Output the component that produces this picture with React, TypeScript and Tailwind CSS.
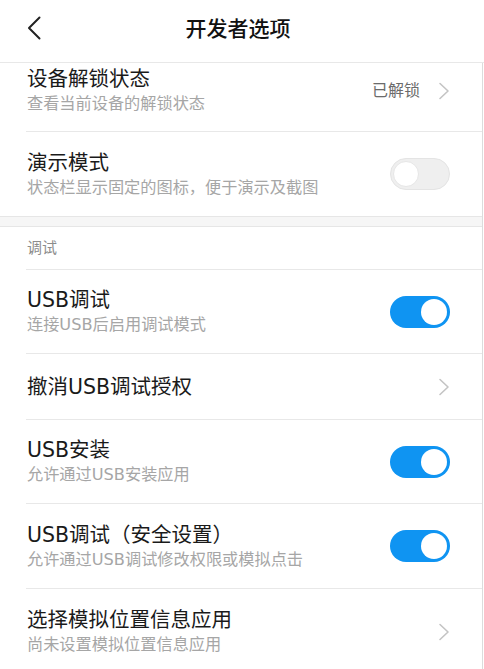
import React from 'react'

const font = { fontFamily: '"DejaVu Sans", "Noto Sans CJK SC", sans-serif' }
const cjk = { fontFamily: '"Noto Sans CJK SC", sans-serif' }

function Chevron() {
  return (
    <svg width="12" height="18" viewBox="0 0 12 18" fill="none" className="shrink-0">
      <polyline points="2,1.5 10,9 2,16.5" stroke="#c4c4c4" strokeWidth="1.6" strokeLinecap="round" strokeLinejoin="round" />
    </svg>
  )
}

function Toggle({ on }: { on: boolean }) {
  if (on) {
    return (
      <div className="w-[60px] h-[32px] rounded-full bg-[#0f94f2] p-[3px] flex justify-end shrink-0">
        <div className="w-[26px] h-[26px] rounded-full bg-white" />
      </div>
    )
  }
  return (
    <div className="w-[60px] h-[32px] rounded-full bg-[#efefef] border border-[#e4e4e4] p-[2px] flex justify-start shrink-0">
      <div className="w-[26px] h-[26px] rounded-full bg-white border border-[#e6e6e6]" />
    </div>
  )
}

interface RowProps {
  title: string
  subtitle?: string
  right?: React.ReactNode
  className: string
}

function Row({ title, subtitle, right, className }: RowProps) {
  return (
    <div className={'flex items-center ml-[26px] pr-[32px] ' + className}>
      <div className="flex-1 flex flex-col pl-[1px]">
        <div className="text-[20.5px] leading-[26px] text-[#1a1a1a]">{title}</div>
        {subtitle && (
          <div className="text-[16.2px] leading-[22px] mt-[1px] text-[#a6a6a6]">{subtitle}</div>
        )}
      </div>
      {right}
    </div>
  )
}

export default function App() {
  return (
    <div className="w-[484px] h-[669px] overflow-hidden bg-white" style={font}>
      {/* Header */}
      <div className="h-[63px] border-b border-[#e8e8e8] grid grid-cols-[56px_1fr_64px] items-center pb-[7px]">
        <div className="pl-[27px] pt-[1px]">
          <svg width="14" height="24" viewBox="0 0 14 24" fill="none">
            <polyline points="12.5,1.5 2,12 12.5,22.5" stroke="#222" strokeWidth="2" strokeLinecap="round" strokeLinejoin="round" />
          </svg>
        </div>
        <div className="text-center text-[21px] font-medium text-[#111]" style={cjk}>开发者选项</div>
        <div />
      </div>

      <div className="border-r border-[#dcdcdc] w-[483px]">
        <Row
          title="设备解锁状态"
          subtitle="查看当前设备的解锁状态"
          className="h-[69px] pb-[13px] border-b border-[#e8e8e8]"
          right={
            <div className="flex items-center gap-[18px]">
              <span className="text-[16px] text-[#6b6b6b]">已解锁</span>
              <Chevron />
            </div>
          }
        />
        <Row
          title="演示模式"
          subtitle="状态栏显示固定的图标，便于演示及截图"
          className="h-[84px]"
          right={<Toggle on={false} />}
        />

        {/* Section gap */}
        <div className="h-[11px] bg-[#f6f6f6] border-t border-b border-[#e6e6e6]" />

        <div className="h-[43px] ml-[26px] pl-[1px] border-b border-[#e8e8e8] flex items-center text-[15px] text-[#8c8c8c]">
          调试
        </div>

        <Row
          title="USB调试"
          subtitle="连接USB后启用调试模式"
          className="h-[84px] border-b border-[#e8e8e8]"
          right={<Toggle on />}
        />
        <Row
          title="撤消USB调试授权"
          className="h-[66px] border-b border-[#e8e8e8]"
          right={<Chevron />}
        />
        <Row
          title="USB安装"
          subtitle="允许通过USB安装应用"
          className="h-[84px] border-b border-[#e8e8e8]"
          right={<Toggle on />}
        />
        <Row
          title="USB调试（安全设置）"
          subtitle="允许通过USB调试修改权限或模拟点击"
          className="h-[85px] border-b border-[#e8e8e8]"
          right={<Toggle on />}
        />
        <Row
          title="选择模拟位置信息应用"
          subtitle="尚未设置模拟位置信息应用"
          className="h-[85px]"
          right={<Chevron />}
        />
      </div>
    </div>
  )
}
